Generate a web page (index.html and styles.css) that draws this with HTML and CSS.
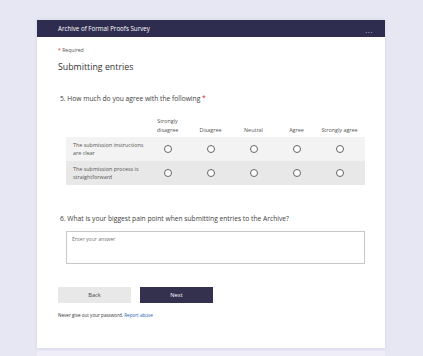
FILE: index.html
```html
<!DOCTYPE html>
<html lang="en">
<head>
  <meta charset="UTF-8" />
  <title>Archive of Formal Proofs Survey</title>
  <link rel="stylesheet" href="styles.css">
</head>
<body>

  <div class="form-card">
    <!-- Title bar -->
    <div class="form-header">
      <span class="form-title">Archive of Formal Proofs Survey</span>
      <span class="more">&middot;&middot;&middot;</span>
    </div>

    <div class="form-body">
      <div class="required-note"><span class="star">*</span> Required</div>
      <h2 class="section-title">Submitting entries</h2>

      <!-- Question 5 -->
      <div class="question">
        <div class="q-title">5. How much do you agree with the following <span class="star">*</span></div>
        <div class="likert">
          <div class="likert-head">
            <div></div>
            <div>Strongly<br>disagree</div>
            <div>Disagree</div>
            <div>Neutral</div>
            <div>Agree</div>
            <div>Strongly agree</div>
          </div>
          <div class="likert-row odd">
            <div class="row-label">The submission instructions are clear</div>
            <div><span class="radio"></span></div>
            <div><span class="radio"></span></div>
            <div><span class="radio"></span></div>
            <div><span class="radio"></span></div>
            <div><span class="radio"></span></div>
          </div>
          <div class="likert-row even">
            <div class="row-label">The submission process is straightforward</div>
            <div><span class="radio"></span></div>
            <div><span class="radio"></span></div>
            <div><span class="radio"></span></div>
            <div><span class="radio"></span></div>
            <div><span class="radio"></span></div>
          </div>
        </div>
      </div>

      <!-- Question 6 -->
      <div class="question q6">
        <div class="q-title">6. What is your biggest pain point when submitting entries to the Archive?</div>
        <div class="answer-box">Enter your answer</div>
      </div>

      <div class="actions">
        <button class="btn back">Back</button>
        <button class="btn next">Next</button>
      </div>

      <p class="footer-note">Never give out your password. <a href="#">Report abuse</a></p>
    </div>
  </div>

  <div class="page-strip"></div>

</body>
</html>
```

FILE: styles.css
```css
* { box-sizing: border-box; margin: 0; padding: 0; }

body {
  font-family: 'Open Sans', 'Liberation Sans', sans-serif;
  background-color: #e7e6f3;
  color: #333;
  height: 356px;
  overflow: hidden;
}

.form-card {
  width: 348px;
  margin: 20px 0 0 37px;
  background: white;
  box-shadow: 0 0 3px rgba(60, 55, 110, 0.12);
}

.form-header {
  height: 17px;
  background-color: #2f2d4f;
  color: white;
  display: flex;
  justify-content: space-between;
  align-items: center;
  padding: 0 12px 0 21px;
}

.form-title {
  font-size: 6.2px;
}

.more {
  font-size: 8px;
  letter-spacing: 0.5px;
  margin-top: 7px;
  line-height: 6px;
  color: #d5d4e2;
}

.form-body {
  padding: 9px 20px 30px 21px;
}

.star { color: #d21e1e; }

.required-note {
  font-size: 5.1px;
  color: #555;
  line-height: 8px;
}

.section-title {
  font-size: 8.8px;
  font-weight: 400;
  color: #323232;
  margin-top: 7px;
  line-height: 12px;
}

.question {
  margin-top: 21px;
  padding-left: 2px;
}

.q-title {
  font-size: 6.7px;
  color: #404040;
  line-height: 10px;
}

.likert {
  margin: 10px 0 0 6px;
  width: 299px;
  font-size: 5.4px;
  color: #555;
}

.likert-head, .likert-row {
  display: grid;
  grid-template-columns: 80px repeat(5, 43px) 4px;
  align-items: center;
}

.likert-head {
  height: 23px;
  padding-bottom: 2px;
  text-align: center;
  line-height: 9px;
  align-items: end;
}

.likert-row {
  height: 24px;
}

.likert-row.odd { background-color: #f3f3f3; }
.likert-row.even { background-color: #e8e8e8; }

.likert-row > div {
  display: flex;
  justify-content: center;
}

.likert-row .row-label {
  display: block;
  padding-left: 7px;
  line-height: 8px;
}

.radio {
  width: 8px;
  height: 8px;
  border: 1px solid #666;
  border-radius: 50%;
  background: white;
}

.q6 {
  margin-top: 29px;
}

.answer-box {
  margin: 7px 0 0 6px;
  width: 299px;
  height: 33px;
  border: 1px solid #c8c8c8;
  font-size: 5.1px;
  color: #777;
  padding: 4px 5px;
}

.actions {
  display: flex;
  gap: 9px;
  margin-top: 23px;
}

.btn {
  width: 73px;
  height: 16px;
  border: none;
  font-family: inherit;
  font-size: 5.6px;
}

.btn.back {
  background-color: #e8e8e8;
  color: #444;
}

.btn.next {
  background-color: #34314f;
  color: white;
}

.footer-note {
  margin-top: 9px;
  font-size: 4.6px;
  color: #333;
}

.footer-note a {
  color: #2764b8;
  text-decoration: none;
}

.page-strip {
  width: 348px;
  height: 20px;
  margin: 3px 0 0 37px;
  background-color: #efeef8;
}
```
